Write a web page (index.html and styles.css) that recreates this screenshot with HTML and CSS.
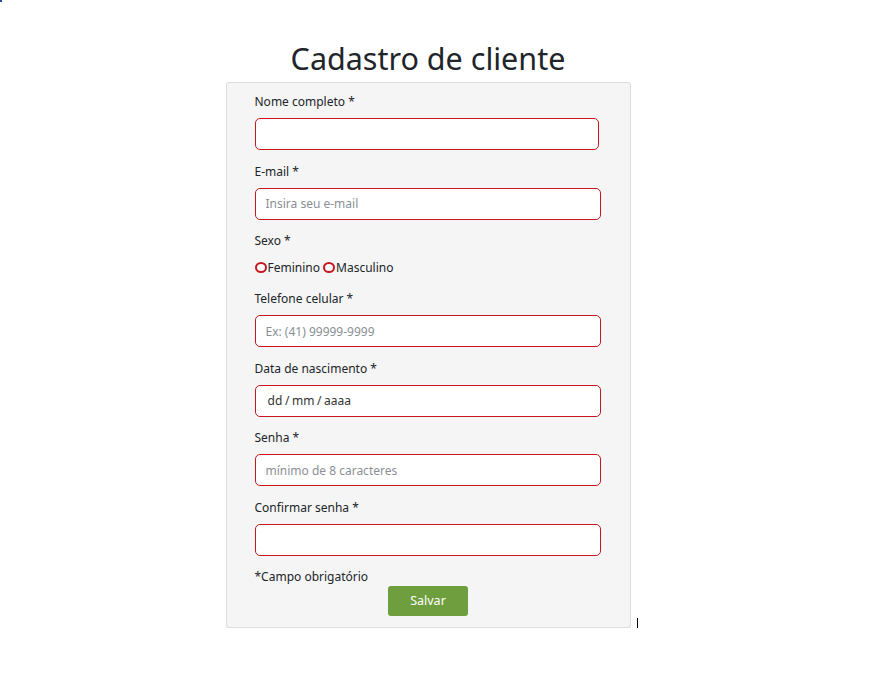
FILE: index.html
```html
<!DOCTYPE html>
<html lang="pt-BR">
<head>
<meta charset="utf-8">
<title>Cadastro de cliente</title>
<link rel="stylesheet" href="styles.css">
</head>
<body>
<span class="corner-dot"></span>
<main class="page">
  <h1 class="title">Cadastro de cliente</h1>
  <form class="card">
    <div class="group">
      <label class="label">Nome completo *</label>
      <input class="field field-narrow" type="text">
    </div>
    <div class="group">
      <label class="label">E-mail *</label>
      <input class="field" type="text" placeholder="Insira seu e-mail">
    </div>
    <div class="group">
      <label class="label">Sexo *</label>
      <div class="radios">
        <span class="radio"></span><span class="radio-text">Feminino</span>
        <span class="radio"></span><span class="radio-text">Masculino</span>
      </div>
    </div>
    <div class="group">
      <label class="label">Telefone celular *</label>
      <input class="field" type="text" placeholder="Ex: (41) 99999-9999">
    </div>
    <div class="group">
      <label class="label">Data de nascimento *</label>
      <div class="field field-date">dd / mm / aaaa</div>
    </div>
    <div class="group">
      <label class="label">Senha *</label>
      <input class="field" type="text" placeholder="mínimo de 8 caracteres">
    </div>
    <div class="group">
      <label class="label">Confirmar senha *</label>
      <input class="field" type="text">
    </div>
    <p class="note">*Campo obrigatório</p>
    <div class="actions"><button class="btn" type="button">Salvar</button></div>
    <span class="cursor"></span>
  </form>
</main>
</body>
</html>
```
FILE: styles.css
```css
html, body { margin: 0; padding: 0; background: #fff; }
body {
  font-family: "Noto Sans", "Open Sans", sans-serif;
  color: #212529;
  font-size: 12px;
}
.corner-dot {
  position: absolute; left: 0; top: 0;
  width: 2px; height: 2px; background: #2b4a9a;
}
.page {
  width: 856px;
  display: flex;
  flex-direction: column;
  align-items: center;
  padding-top: 38px;
}
.title {
  margin: 0;
  font-size: 30.5px;
  font-weight: 400;
  line-height: 40px;
  height: 44px;
  color: #212529;
}
.card {
  position: relative;
  box-sizing: border-box;
  width: 405px;
  margin: 0;
  padding: 9px 31px 11px 28px;
  background: #f5f5f5;
  border: 1px solid #dcdcdc;
  border-radius: 3px;
  box-shadow: 0 1px 1px rgba(0,0,0,0.05);
}
.group { margin-bottom: 11.7px; }
.label {
  display: block;
  line-height: 20px;
  margin-bottom: 6px;
  font-size: 12px;
  color: #212529;
}
.field {
  display: block;
  box-sizing: border-box;
  width: 346px;
  height: 32px;
  margin: 0;
  padding: 0 10px;
  border: 1px solid #c8161d;
  border-radius: 5px;
  background: #fff;
  font-family: inherit;
  font-size: 12px;
  color: #212529;
  outline: none;
}
.field-narrow { width: 344px; }
.field::placeholder { color: #8a8f95; }
.field-date {
  display: flex;
  align-items: center;
  padding-left: 12px;
  word-spacing: -0.5px;
  color: #333;
}
.radios {
  display: flex;
  align-items: center;
  height: 20px;
}
.radio {
  box-sizing: border-box;
  width: 12px; height: 11px;
  border: 2px solid #c8161d;
  border-radius: 50%;
  background: #fff;
  margin-right: 1px;
}
.radio-text { margin-right: 3px; }
.note {
  margin: 0;
  line-height: 18px;
}
.actions {
  display: flex;
  justify-content: center;
  padding-left: 3px;
}
.btn {
  width: 80px;
  height: 30px;
  border: none;
  border-radius: 3px;
  background: #6e9e3d;
  color: #fff;
  font-family: inherit;
  font-size: 12.5px;
  padding: 0;
}
.cursor {
  position: absolute;
  right: -8px;
  bottom: -4px;
  width: 1px;
  height: 13px;
  background: #000;
}
```
